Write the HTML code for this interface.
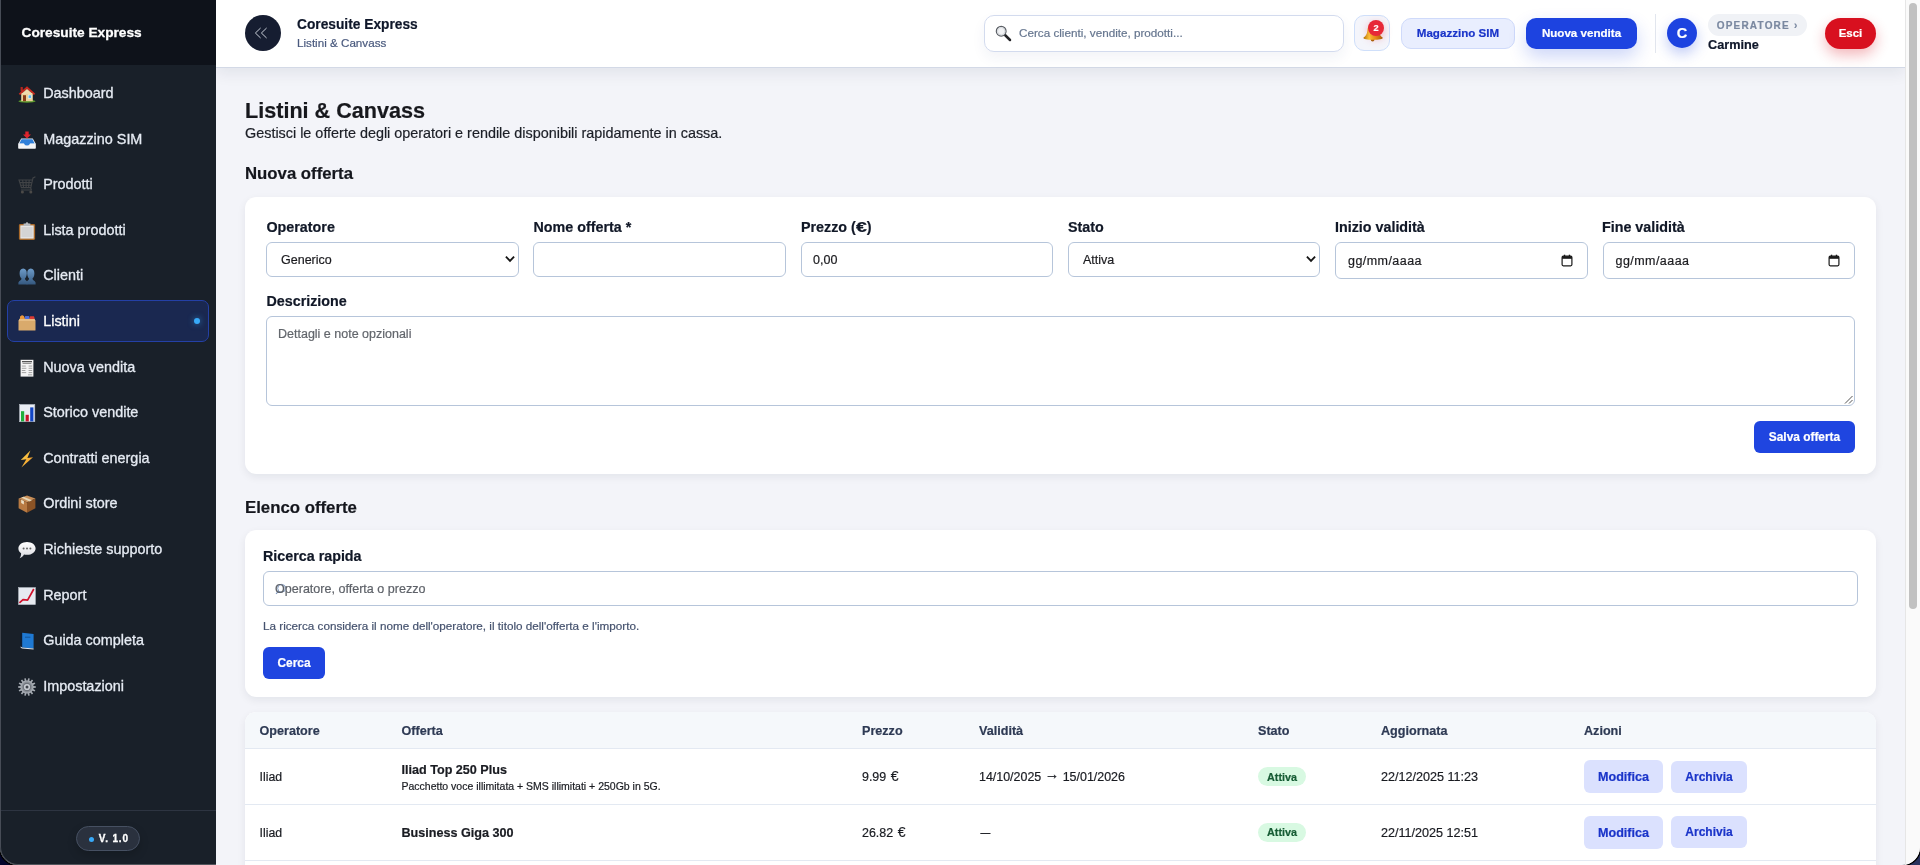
<!DOCTYPE html>
<html lang="it">
<head>
<meta charset="utf-8">
<title>Listini &amp; Canvass - Coresuite Express</title>
<style>
*{box-sizing:border-box;margin:0;padding:0}
html{background:linear-gradient(90deg,#03052c 0%,#03052c 40%,#2a335e 100%)}
html,body{width:1920px;height:865px;overflow:hidden;font-family:"Liberation Sans",Arial,Helvetica,sans-serif;color:#111827}
#win{position:absolute;left:0;top:0;width:1920px;height:865px;overflow:hidden;background:#f3f4f9;border-radius:0 0 18px 18px;will-change:transform;box-shadow:0 0 0 1.5px #000}
.abs{position:absolute}
.t{position:absolute;white-space:nowrap;line-height:1}
/* sidebar */
#sb{position:absolute;left:0;top:0;width:216px;height:865px;background:#192029;overflow:hidden}
#sbe{position:absolute;left:0;top:0;width:217px;height:865px;border-left:1px solid #474c56;border-bottom:1px solid #52565d;border-bottom-left-radius:18px;clip-path:inset(0 1px 0 0);pointer-events:none}
#sbh{position:absolute;left:0;top:0;width:216px;height:65px;background:#0e121a}
#sbh .t{left:21.5px;top:25.7px;font-weight:700;font-size:13.7px;color:#fff}
.nav{position:absolute;left:7px;width:202px;height:42px;border-radius:7px;border:1px solid transparent}
.nav .t{left:35.2px;top:13px;font-size:14.4px;color:#e6ebf3}
.nav svg{position:absolute;left:10px;top:12px;width:18px;height:18px}
.nav.on{background:#1a2850;border-color:#2440a6}
.nav.on .t{color:#fff}
.nav.on i{position:absolute;right:8px;top:17px;width:6px;height:6px;border-radius:50%;background:#38aaf9;box-shadow:0 0 6px rgba(56,170,249,.65)}
#sbf{position:absolute;left:0;top:810px;width:216px;height:55px;border-top:1px solid #2d3441}
#ver{position:absolute;left:76px;top:15px;width:64px;height:25px;border-radius:13px;background:#2a313e;border:1px solid #465062;box-shadow:0 4px 10px rgba(0,0,0,.18)}
#ver i{position:absolute;left:11.5px;top:9.5px;width:5px;height:5px;border-radius:50%;background:#38a9f8}
#ver .t{left:21.8px;top:7.4px;font-size:10px;font-weight:700;color:#fff;letter-spacing:.8px}
/* topbar */
#tb{position:absolute;left:216px;top:0;width:1689px;height:68px;background:#fff;border-bottom:1px solid #d3d9e6;box-shadow:0 6px 14px rgba(15,23,60,.07)}
#tb>*{position:absolute}
#tgl{left:29px;top:15px;width:36px;height:36px;border-radius:50%;background:#161d31}
/* scrollbar */
#scr{position:absolute;left:1905px;top:0;width:15px;height:865px;background:#fafafa;border-left:1px solid #e6e6e6}
#scr i{position:absolute;left:3px;top:3px;width:8px;height:606px;border-radius:4px;background:#c1c1c1}
/* content */
.card{position:absolute;left:245px;width:1631px;background:#fff;border-radius:11.5px;box-shadow:0 3px 9px rgba(15,23,42,.07)}
.lbl{position:absolute;white-space:nowrap;line-height:1;font-weight:700;font-size:14.3px;color:#111827}
.inp{position:absolute;height:35px;background:#fff;border:1px solid #b6c5da;border-radius:6px}
.inp .t{font-size:12.5px;color:#1b1b1f}
.btn{position:absolute;border-radius:6px;background:#1f45e0;color:#fff;font-weight:700;font-size:11.9px;text-align:center;white-space:nowrap}
.sbtn{position:absolute;height:33px;border-radius:6px;background:#dbe1fe;color:#1a34c9;font-weight:700;font-size:12.6px;text-align:center;line-height:33px;white-space:nowrap}
.th{position:absolute;white-space:nowrap;line-height:1;font-weight:700;font-size:12.6px;color:#2e3a54;top:13px}
.td{position:absolute;white-space:nowrap;line-height:1;font-size:12.3px;color:#1a1c22}
.badge{position:absolute;height:19px;border-radius:10px;background:#d8f9e2;color:#165c34;font-weight:700;font-size:10.8px;line-height:20.5px;text-align:center;width:48px}
.eu{font-size:14px;margin-left:1.2px;line-height:0}
.ar{font-size:14.5px;line-height:0;font-weight:700;position:relative;top:-1.6px}
#main .t,#main .lbl,#main .td,#main .th,#tb .t,#tb>div,.btn,.sbtn,.badge{-webkit-text-stroke:.2px currentColor}
.nav .t,#sbh .t,#ver .t{-webkit-text-stroke:.3px currentColor}
</style>
</head>
<body>
<div id="win">
<!-- MAIN CONTENT -->
<div id="main">
  <div class="t" style="left:245px;top:100px;font-size:21.6px;font-weight:700;color:#17181d">Listini &amp; Canvass</div>
  <div class="t" style="left:245px;top:126.2px;font-size:14.4px;color:#1c1f27">Gestisci le offerte degli operatori e rendile disponibili rapidamente in cassa.</div>
  <div class="t" style="left:245px;top:166px;font-size:16.75px;font-weight:700;color:#14161d">Nuova offerta</div>

  <div class="card" id="c1" style="top:197px;height:277px">
    <div class="lbl" style="left:21.5px;top:23px">Operatore</div>
    <div class="lbl" style="left:288.5px;top:23px">Nome offerta *</div>
    <div class="lbl" style="left:556px;top:23px">Prezzo (<span style="display:inline-block;transform:scaleX(1.36);transform-origin:0 50%;margin-right:2.9px">€</span>)</div>
    <div class="lbl" style="left:823px;top:23px">Stato</div>
    <div class="lbl" style="left:1090px;top:23px">Inizio validità</div>
    <div class="lbl" style="left:1357px;top:23px">Fine validità</div>

    <div class="inp" style="left:21px;top:45px;width:253px"><span class="t" style="left:14px;top:10.5px">Generico</span>
      <svg class="abs" style="right:3px;top:11.4px" width="10" height="10" viewBox="0 0 10 10"><path d="M0.9 2.6 L5 6.9 L9.1 2.6" fill="none" stroke="#151515" stroke-width="1.8"/></svg></div>
    <div class="inp" style="left:288px;top:45px;width:253px"></div>
    <div class="inp" style="left:556px;top:45px;width:252px"><span class="t" style="left:11px;top:10.5px">0,00</span></div>
    <div class="inp" style="left:823px;top:45px;width:252px"><span class="t" style="left:14px;top:10.5px">Attiva</span>
      <svg class="abs" style="right:3px;top:11.4px" width="10" height="10" viewBox="0 0 10 10"><path d="M0.9 2.6 L5 6.9 L9.1 2.6" fill="none" stroke="#151515" stroke-width="1.8"/></svg></div>
    <div class="inp" style="left:1090px;top:45px;width:252.5px;height:37px"><span class="t" style="left:12px;top:12px;letter-spacing:.45px">gg/mm/aaaa</span>
      <svg class="abs" style="right:13.5px;top:10.5px" width="12" height="13" viewBox="0 0 12 13"><rect x="1.1" y="2.2" width="9.8" height="9.6" rx="1.2" fill="none" stroke="#1a1a1a" stroke-width="1.2"/><rect x="1.1" y="2.2" width="9.8" height="2.6" fill="#1a1a1a"/><rect x="2.9" y="0.7" width="1.3" height="2" fill="#1a1a1a"/><rect x="7.8" y="0.7" width="1.3" height="2" fill="#1a1a1a"/></svg></div>
    <div class="inp" style="left:1357.5px;top:45px;width:252px;height:37px"><span class="t" style="left:12px;top:12px;letter-spacing:.45px">gg/mm/aaaa</span>
      <svg class="abs" style="right:13.5px;top:10.5px" width="12" height="13" viewBox="0 0 12 13"><rect x="1.1" y="2.2" width="9.8" height="9.6" rx="1.2" fill="none" stroke="#1a1a1a" stroke-width="1.2"/><rect x="1.1" y="2.2" width="9.8" height="2.6" fill="#1a1a1a"/><rect x="2.9" y="0.7" width="1.3" height="2" fill="#1a1a1a"/><rect x="7.8" y="0.7" width="1.3" height="2" fill="#1a1a1a"/></svg></div>

    <div class="lbl" style="left:21.5px;top:97px">Descrizione</div>
    <div class="inp" style="left:21px;top:119px;width:1589px;height:90px"><span class="t" style="left:11px;top:11px;color:#62666c">Dettagli e note opzionali</span>
      <svg class="abs" style="right:1px;bottom:1px" width="9" height="9" viewBox="0 0 9 9"><path d="M8.5 1 L1 8.5 M8.5 5 L5 8.5" stroke="#555" stroke-width="1" fill="none"/></svg></div>
    <div class="btn" style="left:1509px;top:224px;width:101px;height:32px;line-height:32px">Salva offerta</div>
  </div>

  <div class="t" style="left:245px;top:499.5px;font-size:16.8px;font-weight:700;color:#14161d">Elenco offerte</div>

  <div class="card" id="c2" style="top:530px;height:167px">
    <div class="lbl" style="left:18px;top:19px">Ricerca rapida</div>
    <div class="inp" style="left:18px;top:41px;width:1595px"><svg class="abs" style="left:11px;top:11px" width="11" height="12" viewBox="0 0 11 12"><circle cx="6.6" cy="5.3" r="3.9" fill="none" stroke="#7f99c0" stroke-width="1"/><path d="M3.8 8.1 L1 10.8" stroke="#7f99c0" stroke-width="1.1"/></svg><span class="t" style="left:11px;top:10.5px;color:#5e6269;font-size:12.55px">Operatore, offerta o prezzo</span></div>
    <div class="t" style="left:18px;top:89.6px;font-size:11.69px;color:#46536f">La ricerca considera il nome dell'operatore, il titolo dell'offerta e l'importo.</div>
    <div class="btn" style="left:18px;top:117px;width:62px;height:32px;line-height:32px">Cerca</div>
  </div>

  <div class="card" id="c3" style="top:712px;height:200px;overflow:hidden">
    <div class="abs" style="left:0;top:0;width:1631px;height:37px;background:#f5f8fb;border-bottom:1px solid #e3e9f2"></div>
    <div class="th" style="left:14.5px">Operatore</div>
    <div class="th" style="left:156.5px">Offerta</div>
    <div class="th" style="left:617px">Prezzo</div>
    <div class="th" style="left:734px">Validità</div>
    <div class="th" style="left:1013px">Stato</div>
    <div class="th" style="left:1136px">Aggiornata</div>
    <div class="th" style="left:1339px">Azioni</div>

    <div class="abs" style="left:0;top:92px;width:1631px;height:1px;background:#e3e9f2"></div>
    <div class="abs" style="left:0;top:148px;width:1631px;height:1px;background:#e3e9f2"></div>

    <div class="td" style="left:14.5px;top:58.5px">Iliad</div>
    <div class="td" style="left:156.5px;top:51.5px;font-weight:700;font-size:12.6px">Iliad Top 250 Plus</div>
    <div class="td" style="left:156.5px;top:68.5px;font-size:10.5px">Pacchetto voce illimitata + SMS illimitati + 250Gb in 5G.</div>
    <div class="td" style="left:617px;top:58.5px;font-size:12.45px">9.99 <span class="eu">€</span></div>
    <div class="td" style="left:734px;top:58.5px;font-size:12.45px">14/10/2025 <span class="ar">→</span> 15/01/2026</div>
    <div class="badge" style="left:1013px;top:55px">Attiva</div>
    <div class="td" style="left:1136px;top:58.5px;font-size:12.6px">22/12/2025 11:23</div>
    <div class="sbtn" style="left:1339px;top:48px;width:79px;line-height:35px">Modifica</div>
    <div class="sbtn" style="left:1426px;top:49px;width:76px;height:32px;line-height:32px;font-size:12px">Archivia</div>

    <div class="td" style="left:14.5px;top:114.5px">Iliad</div>
    <div class="td" style="left:156.5px;top:114.5px;font-weight:700;font-size:12.6px">Business Giga 300</div>
    <div class="td" style="left:617px;top:114.5px;font-size:12.45px">26.82 <span class="eu">€</span></div>
    <div class="td" style="left:735.5px;top:115.8px;font-size:9.8px;font-weight:700">—</div>
    <div class="badge" style="left:1013px;top:111px;line-height:19px">Attiva</div>
    <div class="td" style="left:1136px;top:114.5px;font-size:12.6px">22/11/2025 12:51</div>
    <div class="sbtn" style="left:1339px;top:104px;width:79px;line-height:35px">Modifica</div>
    <div class="sbtn" style="left:1426px;top:104px;width:76px;height:32px;line-height:32px;font-size:12px">Archivia</div>
  </div>
</div>

<!-- TOPBAR -->
<div id="tb">
  <div id="tgl"><svg class="abs" style="left:9px;top:12px" width="14" height="12" viewBox="0 0 14 12"><path d="M6.6 1 L1.4 6 L6.6 11 M12.6 1 L7.4 6 L12.6 11" fill="none" stroke="#d3d8e2" stroke-width=".95"/></svg></div>
  <div class="t" style="left:81px;top:17.9px;font-size:13.75px;font-weight:700;color:#0f172a">Coresuite Express</div>
  <div class="t" style="left:81px;top:37px;font-size:11.65px;color:#4a5a7e">Listini &amp; Canvass</div>

  <div style="left:768px;top:15px;width:360px;height:37px;border:1px solid #d3dbee;border-radius:10px;background:#fff;box-shadow:0 6px 14px rgba(30,50,120,.06)">
    <svg class="abs" style="left:10px;top:9.2px" width="17" height="17" viewBox="0 0 17 17"><path d="M10 10 L15 15" stroke="#232326" stroke-width="2.5" stroke-linecap="round"/><circle cx="6.2" cy="6.2" r="4.9" fill="#eceef0" stroke="#5a5e64" stroke-width="1.15"/><circle cx="6.2" cy="6.2" r="3.7" fill="#f1f2f4" stroke="#cdd1d6" stroke-width=".8"/></svg>
    <span class="t" style="left:34px;top:11px;font-size:11.7px;color:#66768f">Cerca clienti, vendite, prodotti...</span>
  </div>
  <div style="left:1138px;top:15px;width:36px;height:36px;border:1px solid #cfdffa;border-radius:10px;background:#f4f5fb">
    <svg class="abs" style="left:8px;top:7px" width="21" height="19" viewBox="0 0 21 19"><defs><linearGradient id="gbl" x1="0" y1="0" x2="1" y2="0"><stop offset="0" stop-color="#b06c06"/><stop offset=".3" stop-color="#ffd23a"/><stop offset=".65" stop-color="#e39a12"/><stop offset="1" stop-color="#a05e04"/></linearGradient></defs><circle cx="9.6" cy="16.6" r="1.9" fill="#a86608"/><path d="M10 0.4 C14.4 0.4 15.4 4 15.8 8 C16.1 11.4 17.6 13.2 19.8 14.8 C19.8 16.2 16 16.8 10 16.8 C4 16.8 0.4 16.2 0.4 14.8 C2.6 13.2 4 11.4 4.3 8 C4.7 4 5.6 0.4 10 0.4 Z" fill="url(#gbl)"/></svg>
    <div class="abs" style="left:13px;top:3.6px;width:16px;height:16px;border-radius:50%;background:#e72838;box-shadow:0 3px 8px rgba(231,40,56,.35);color:#fff;font-weight:700;font-size:9.2px;line-height:16px;text-align:center">2</div>
  </div>
  <div style="left:1185px;top:18px;width:114px;height:31px;border:1px solid #cfdafa;border-radius:10px;background:#e9eefe;color:#1a34c9;font-weight:700;font-size:11.6px;line-height:27px;text-align:center">Magazzino SIM</div>
  <div style="left:1310px;top:18px;width:111px;height:31px;border-radius:10px;background:#1d43e0;color:#fff;font-weight:700;font-size:11.6px;line-height:29px;text-align:center;box-shadow:0 8px 18px rgba(29,67,224,.22)">Nuova vendita</div>
  <div style="left:1439px;top:14px;width:1px;height:39px;background:#e2e6ee"></div>
  <div style="left:1451px;top:18px;width:30px;height:30px;border-radius:50%;background:#1d43e0;color:#fff;font-weight:700;font-size:14.6px;line-height:30px;text-align:center;box-shadow:0 6px 14px rgba(29,67,224,.28)">C</div>
  <div style="left:1492px;top:14px;width:99px;height:22px;border-radius:11px;background:#f0f2f6"><span class="t" style="left:8.7px;top:6.7px;font-size:10px;font-weight:700;color:#7a88a0;letter-spacing:1.2px">OPERATORE ›</span></div>
  <div class="t" style="left:1492px;top:39px;font-size:12.7px;font-weight:700;color:#0f172a">Carmine</div>
  <div style="left:1609px;top:18px;width:51px;height:31px;border-radius:16px;background:#d8101f;color:#fff;font-weight:700;font-size:11.5px;line-height:31px;text-align:center;box-shadow:0 6px 14px rgba(216,16,31,.3)">Esci</div>
</div>

<!-- SIDEBAR -->
<div id="sb">
  <div id="sbh"><div class="t">Coresuite Express</div></div>
  <div class="nav" style="top:72px"><svg viewBox="0 0 18 18"><ellipse cx="9" cy="16.2" rx="8.6" ry="1.5" fill="#5a9a2c"/><rect x="2.6" y="2" width="2.2" height="4.5" fill="#b5261e"/><rect x="3.2" y="8" width="11.6" height="8.2" fill="#ecd29c"/><path d="M9 1.2 L17.3 8.8 L15.9 10 L9 3.9 L2.1 10 L0.7 8.8 Z" fill="#c6291f"/><path d="M9 3.9 L14.8 9 L3.2 9 Z" fill="#f1dcae"/><rect x="5" y="10.2" width="3" height="6" fill="#8a3d16"/><rect x="10.2" y="10" width="3.2" height="3.2" fill="#58b6ee" stroke="#fff" stroke-width=".5"/></svg><div class="t">Dashboard</div></div>
  <div class="nav" style="top:117.6px"><svg viewBox="0 0 18 18"><path d="M3.2 7.6 H14.8 L17.6 12.6 V17 Q17.6 17.6 17 17.6 H1 Q0.4 17.6 0.4 17 V12.6 Z" fill="#eceef2"/><path d="M3.6 8.2 H14.4 L16.6 12.4 H12 Q11.6 14.6 9 14.6 Q6.4 14.6 6 12.4 H1.4 Z" fill="#2f7fd9"/><path d="M0.4 12.8 H5.8 Q6.2 15 9 15 Q11.8 15 12.2 12.8 H17.6 V17 Q17.6 17.6 17 17.6 H1 Q0.4 17.6 0.4 17 Z" fill="#f3f4f6"/><path d="M7.3 0.4 H10.7 V3.6 H13 L9 7.6 L5 3.6 H7.3 Z" fill="#e0242c"/></svg><div class="t">Magazzino SIM</div></div>
  <div class="nav" style="top:163.2px"><svg viewBox="0 0 18 18"><g fill="none" stroke="#414346" stroke-width="1.1"><path d="M17.4 0.8 L15 2 L12.8 11.6 H3.4 L1 4 H14.4"/><path d="M2 6.6 H13.8 M2.8 9.2 H13.3 M4.6 4 L5.6 11.6 M8 4 L8.2 11.6 M11.2 4 L10.6 11.6"/><path d="M12.6 11.6 L13.4 14 H3"/></g><circle cx="4.4" cy="16" r="1.5" fill="#4c4a48"/><circle cx="12.8" cy="16" r="1.5" fill="#4c4a48"/></svg><div class="t">Prodotti</div></div>
  <div class="nav" style="top:208.8px"><svg viewBox="0 0 18 18"><rect x="0.9" y="2" width="16.2" height="15.9" rx="1.4" fill="#a8692a"/><rect x="2.3" y="3.4" width="13.4" height="13.2" fill="#e6e6e6"/><rect x="3.4" y="5" width="11.2" height="10.2" fill="#d4d4d4"/><path d="M5.6 1.6 H7.6 Q7.8 0.3 9 0.3 Q10.2 0.3 10.4 1.6 H12.4 V4 H5.6 Z" fill="#b9bcc0"/></svg><div class="t">Lista prodotti</div></div>
  <div class="nav" style="top:254.4px"><svg viewBox="0 0 18 18"><defs><linearGradient id="gcl" x1="0" y1="0" x2="0" y2="1"><stop offset="0" stop-color="#6d9bc8"/><stop offset="1" stop-color="#34577e"/></linearGradient></defs><g fill="url(#gcl)"><path d="M5.2 1.6 C7.8 1.6 8.8 3.8 8.8 6.4 C8.8 9 7.6 10.8 6.9 11.6 C6.9 13.4 8.6 13.6 9.4 14.8 V17.6 H0.4 V15.4 C1.2 13.8 3.5 13.6 3.5 11.6 C2.6 10.6 1.6 9 1.6 6.4 C1.6 3.8 2.6 1.6 5.2 1.6 Z"/><path d="M12.8 1.6 C15.4 1.6 16.4 3.8 16.4 6.4 C16.4 9 15.4 10.6 14.5 11.6 C14.5 13.6 16.8 13.8 17.6 15.4 V17.6 H8.6 V14.8 C9.4 13.6 11.1 13.4 11.1 11.6 C10.4 10.8 9.2 9 9.2 6.4 C9.2 3.8 10.2 1.6 12.8 1.6 Z"/></g></svg><div class="t">Clienti</div></div>
  <div class="nav on" style="top:300px"><svg viewBox="0 0 18 18"><path d="M2 5.4 Q2 2.6 4.2 2.6 Q6.4 2.6 6.4 5.4 V7 H2 Z" fill="#ec9a3c"/><rect x="7" y="3.2" width="4.2" height="3.6" rx=".6" fill="#4f6fdc"/><rect x="7.6" y="4.2" width="3" height=".9" fill="#c9d3f5"/><rect x="11.8" y="3.4" width="4.4" height="4" rx=".6" fill="#db3b34"/><path d="M1.6 5.8 H16.4 L17.5 8 V17 Q17.5 17.6 16.9 17.6 H1.1 Q0.5 17.6 0.5 17 V8 Z" fill="#d9aa6c"/><path d="M1.6 5.8 H16.4 L17.5 8 H0.5 Z" fill="#e6bd85"/><rect x="11.8" y="3.4" width="4.4" height="2.6" rx=".6" fill="#db3b34"/><rect x="7" y="3.2" width="4.2" height="2.8" rx=".6" fill="#4f6fdc"/><path d="M2 5.4 Q2 2.6 4.2 2.6 Q6.4 2.6 6.4 5.4 V6 H2 Z" fill="#ec9a3c"/></svg><div class="t">Listini</div><i></i></div>
  <div class="nav" style="top:345.6px"><svg viewBox="0 0 18 18"><rect x="2.6" y="0.8" width="12.8" height="16.8" fill="#f4f4f4"/><rect x="4" y="2" width="10" height="1.3" fill="#555"/><rect x="4.6" y="4" width="8.8" height=".9" fill="#8a8a8a"/><g fill="#9a9a9a"><rect x="3.8" y="6.6" width="4" height=".9"/><rect x="10.6" y="6.6" width="3.6" height=".9"/><rect x="3.8" y="8.8" width="4.6" height=".9"/><rect x="10.6" y="8.8" width="3.6" height=".9"/><rect x="3.8" y="11" width="3.6" height=".9"/><rect x="10.6" y="11" width="3.6" height=".9"/><rect x="3.8" y="13.2" width="4.4" height=".9"/><rect x="10.6" y="13.2" width="3.6" height=".9"/><rect x="10" y="15.4" width="4.2" height=".9"/></g></svg><div class="t">Nuova vendita</div></div>
  <div class="nav" style="top:391.2px"><svg viewBox="0 0 18 18"><rect x="1.6" y="0.5" width="15.2" height="17.2" fill="#e9edf3" stroke="#b8bec8" stroke-width=".6"/><rect x="3" y="7.2" width="3.2" height="10.2" fill="#1fae3c"/><rect x="7.6" y="10.8" width="3.2" height="6.6" fill="#c4122a"/><rect x="12.2" y="3.4" width="3.2" height="14" fill="#1245c4"/></svg><div class="t">Storico vendite</div></div>
  <div class="nav" style="top:436.8px"><svg viewBox="0 0 18 18"><defs><linearGradient id="glt" x1="0" y1="0" x2="1" y2="1"><stop offset="0" stop-color="#ffe45a"/><stop offset="1" stop-color="#f08518"/></linearGradient></defs><path d="M12.4 0.6 L2.8 10.1 L8.4 9.3 L3.4 17.6 L15 7.3 L9.4 8.1 Z" fill="url(#glt)"/></svg><div class="t">Contratti energia</div></div>
  <div class="nav" style="top:482.4px"><svg viewBox="0 0 18 18"><path d="M9 0.4 L17.4 3.6 L9 7.6 L0.6 3.6 Z" fill="#c78e58"/><path d="M0.6 3.6 L9 7.6 V17.8 L0.6 13.2 Z" fill="#b87a42"/><path d="M9 7.6 L17.4 3.6 V13.2 L9 17.8 Z" fill="#8c5426"/><path d="M5.6 1.7 L14 5.2 L11.4 6.5 L3.2 2.6 Z" fill="#e6d6b6"/><path d="M3.2 4.85 L5.9 6.1 V9.4 L3.2 8 Z" fill="#ece0c6"/></svg><div class="t">Ordini store</div></div>
  <div class="nav" style="top:528px"><svg viewBox="0 0 18 18"><defs><linearGradient id="gsp" x1="0" y1="0" x2="0" y2="1"><stop offset="0" stop-color="#ffffff"/><stop offset="1" stop-color="#d9dbe0"/></linearGradient></defs><path d="M9 1 C13.8 1 17.6 3.8 17.6 7.4 C17.6 11 13.8 13.8 9 13.8 C7.9 13.8 6.9 13.7 6 13.4 C4.8 15.4 3 16.8 1.6 17.2 C2.6 16 3.2 14.2 3.1 12.2 C1.4 11 0.4 9.3 0.4 7.4 C0.4 3.8 4.2 1 9 1 Z" fill="url(#gsp)"/><circle cx="5.6" cy="7.6" r="1" fill="#666"/><circle cx="9" cy="7.6" r="1" fill="#666"/><circle cx="12.4" cy="7.6" r="1" fill="#666"/></svg><div class="t">Richieste supporto</div></div>
  <div class="nav" style="top:573.6px"><svg viewBox="0 0 18 18"><rect x="0.6" y="0.6" width="16.8" height="17" fill="#e6eaf0" stroke="#b8bec8" stroke-width=".6"/><path d="M1.4 15.8 L5 12.6 L9.6 13.2 L15.8 2" fill="none" stroke="#d0122c" stroke-width="1.7" stroke-linejoin="round"/></svg><div class="t">Report</div></div>
  <div class="nav" style="top:619.2px"><svg viewBox="0 0 18 18"><path d="M2.6 1.2 L4.2 0.8 V15.4 L2.6 14.6 Z" fill="#0c1d33"/><path d="M4.2 0.8 L15.6 2 V16.6 L4.2 15.4 Z" fill="#1f79d2"/><path d="M2.6 14.6 L4.2 15.4 L15.6 16.6 V17.4 L4 16.4 L2.6 15.4 Z" fill="#dfe6ee"/><rect x="7" y="4.6" width="5.4" height="1.4" fill="#185fa8"/></svg><div class="t">Guida completa</div></div>
  <div class="nav" style="top:664.8px"><svg viewBox="0 0 18 18"><path d="M17.86 8.20 L17.86 9.80 L15.54 9.89 L15.28 11.04 L17.33 12.13 L16.64 13.56 L14.51 12.64 L13.77 13.56 L15.15 15.43 L13.90 16.43 L12.39 14.67 L11.32 15.18 L11.75 17.46 L10.19 17.82 L9.59 15.57 L8.41 15.57 L7.81 17.82 L6.25 17.46 L6.68 15.18 L5.61 14.67 L4.10 16.43 L2.85 15.43 L4.23 13.56 L3.49 12.64 L1.36 13.56 L0.67 12.13 L2.72 11.04 L2.46 9.89 L0.14 9.80 L0.14 8.20 L2.46 8.11 L2.72 6.96 L0.67 5.87 L1.36 4.44 L3.49 5.36 L4.23 4.44 L2.85 2.57 L4.10 1.57 L5.61 3.33 L6.68 2.82 L6.25 0.54 L7.81 0.18 L8.41 2.43 L9.59 2.43 L10.19 0.18 L11.75 0.54 L11.32 2.82 L12.39 3.33 L13.90 1.57 L15.15 2.57 L13.77 4.44 L14.51 5.36 L16.64 4.44 L17.33 5.87 L15.28 6.96 L15.54 8.11 Z" fill="#a4a9b0"/><circle cx="9" cy="9" r="5.4" fill="#8b9098"/><circle cx="9" cy="9" r="4.2" fill="#6f747c"/><circle cx="9" cy="9" r="3.1" fill="#c9cdd3"/><circle cx="9" cy="9" r="1.5" fill="#3f444c"/></svg><div class="t">Impostazioni</div></div>
  <div id="sbf"><div id="ver"><i></i><div class="t">V. 1.0</div></div></div>
</div>

<div id="sbe"></div>
<div id="scr"><i></i></div>
</div>
</body>
</html>
